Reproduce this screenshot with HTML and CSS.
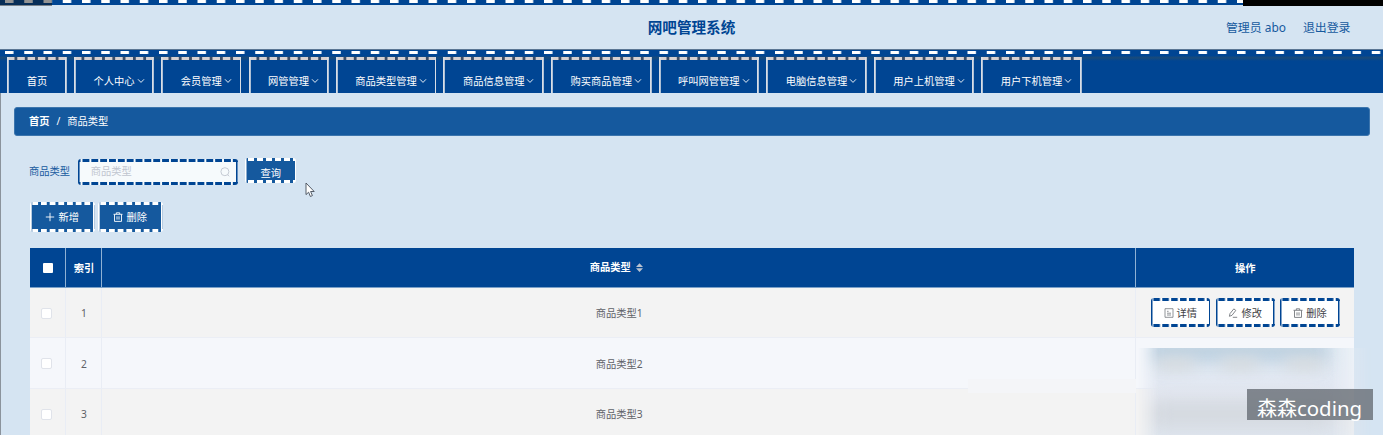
FILE: index.html
```html
<!DOCTYPE html>
<html lang="zh-CN">
<head>
<meta charset="utf-8">
<title>网吧管理系统</title>
<link rel="stylesheet" href="styles.css">
</head>
<body>
<svg class="defs" width="0" height="0">
  <symbol id="chev" viewBox="0 0 8 8"><path d="M1 2.3 4 5.4 7 2.3" fill="none" stroke="currentColor" stroke-width=".9"/></symbol>
  <symbol id="trash" viewBox="0 0 10 10"><path d="M.5 2.3h9M3.3 2.1V.8h3.4v1.3M1.5 2.4v7h7v-7M4 4.3v3.3M6 4.3v3.3" fill="none" stroke="currentColor" stroke-width=".9"/></symbol>
  <symbol id="doc" viewBox="0 0 10 10"><path d="M1 .7h8v8.6H1zM3 3.3h1.6M3 5.2h4M3 7h4" fill="none" stroke="currentColor" stroke-width=".8"/></symbol>
  <symbol id="edit" viewBox="0 0 10 10"><path d="M1.4 8.3 2 5.6 5.8.9l2 1.5L4 7.3ZM4.8 9.3h4.4" fill="none" stroke="currentColor" stroke-width=".9"/></symbol>
</svg>
<header class="topbar">
  <div class="stitches"></div>
  <div class="topbar-row">
    <h1 class="title">网吧管理系统</h1>
    <div class="account"><span>管理员 abo</span><span>退出登录</span></div>
  </div>
  <i class="mark mark-left"></i><i class="mark mark-right"></i>
</header>
<div class="menu">
  <div class="menu-stitches"></div>
  <nav class="tabs">
    <a class="tab home">首页</a>
    <a class="tab short">个人中心<svg><use href="#chev"/></svg></a>
    <a class="tab short">会员管理<svg><use href="#chev"/></svg></a>
    <a class="tab short">网管管理<svg><use href="#chev"/></svg></a>
    <a class="tab">商品类型管理<svg><use href="#chev"/></svg></a>
    <a class="tab">商品信息管理<svg><use href="#chev"/></svg></a>
    <a class="tab">购买商品管理<svg><use href="#chev"/></svg></a>
    <a class="tab">呼叫网管管理<svg><use href="#chev"/></svg></a>
    <a class="tab">电脑信息管理<svg><use href="#chev"/></svg></a>
    <a class="tab">用户上机管理<svg><use href="#chev"/></svg></a>
    <a class="tab">用户下机管理<svg><use href="#chev"/></svg></a>
  </nav>
</div>
<main class="page">
  <div class="crumbs"><b>首页</b><span class="sep">/</span><span>商品类型</span></div>
  <div class="search">
    <label class="label">商品类型</label>
    <div class="stitched field"><span>商品类型</span><svg class="lens" viewBox="0 0 10 10"><circle cx="4.9" cy="4.7" r="4" fill="none" stroke="currentColor" stroke-width=".9"/><path d="m7.6 7.7 1.7 1.6" stroke="currentColor" stroke-width=".9"/></svg></div>
    <button class="stitched query">查询</button>
  </div>
  <div class="actions">
    <button class="stitched act"><svg class="ico" viewBox="0 0 10 10"><path d="M5 .8v8.4M.8 5h8.4" stroke="currentColor" stroke-width=".9"/></svg>新增</button>
    <button class="stitched act"><svg class="ico"><use href="#trash"/></svg>删除</button>
  </div>
  <section class="table">
    <div class="row head">
      <div class="cell"><i class="box"></i></div><div class="cell">索引</div>
      <div class="cell">商品类型<svg class="sort" viewBox="0 0 7 9"><path d="M0 3.9 3.5.3 7 3.9zM0 5.3h7L3.5 8.9z" fill="#b9c2d0"/></svg></div>
      <div class="cell">操作</div>
    </div>
    <div class="row odd">
      <div class="cell"><i class="box"></i></div><div class="cell">1</div><div class="cell">商品类型1</div>
      <div class="cell ops">
        <button class="stitched op"><svg class="ico"><use href="#doc"/></svg>详情</button>
        <button class="stitched op"><svg class="ico"><use href="#edit"/></svg>修改</button>
        <button class="stitched op"><svg class="ico"><use href="#trash"/></svg>删除</button>
      </div>
    </div>
    <div class="row even"><div class="cell"><i class="box"></i></div><div class="cell">2</div><div class="cell">商品类型2</div><div class="cell"></div></div>
    <div class="row odd"><div class="cell"><i class="box"></i></div><div class="cell">3</div><div class="cell">商品类型3</div><div class="cell"></div></div>
  </section>
</main>
<div class="patch"></div>
<div class="haze"><div class="haze-edge"></div><i class="smudge s1"></i><i class="smudge s2"></i><i class="smudge s3"></i><i class="smudge s4"></i></div>
<div class="watermark">森森<span>coding</span></div>
<svg class="cursor" viewBox="0 0 10 16"><path d="M1 1v11.6l2.6-2.4 1.8 4.3 2-.9-1.8-4.1h3.6z" fill="#fff" stroke="#444c58" stroke-width=".9"/></svg>
</body>
</html>
```
FILE: styles.css
```css
* { box-sizing: border-box; }
body {
  margin: 0; width: 1383px; height: 435px; overflow: hidden; position: relative;
  background: #d5e4f2; color: #5f6268;
  font: 10.25px/1.4 "Noto Sans", "Noto Sans CJK SC", sans-serif;
}
.defs { position: absolute; }
button { font: inherit; padding: 0; border: 0; }

.topbar { height: 49px; position: relative; }
.stitches {
  height: 5px; background-color: #004593;
  background-image: linear-gradient(90deg, #fff 8px, transparent 9px);
  background-size: 19.26px 3px; background-position: 5px 0; background-repeat: repeat-x;
}
.topbar-row { display: grid; grid-template-columns: 1fr auto 1fr; align-items: center; height: 44px; }
.title { grid-column: 2; margin: 0; font-size: 14.6px; line-height: 20px; color: #004593; font-weight: 700; }
.account { display: flex; justify-content: flex-end; gap: 17px; padding-right: 32.5px; font-size: 11.9px; color: #15599e; }
.mark { position: absolute; top: 0; height: 6px; }
.mark-left { left: 0; width: 52px; background: rgba(15, 15, 15, .45); }
.mark-right { right: 0; width: 140px; background: #000; }

.menu { height: 44px; background: linear-gradient(#5b7694 0 1px, #004593 1px 7px, #174a7c 8px 9px, #004593 12px); }
.menu-stitches {
  height: 7.5px;
  background: linear-gradient(90deg, #fff 8px, transparent 9px) 5px 2px / 19.26px 3px repeat-x;
}
.tabs { display: flex; gap: 7.1px; padding-left: 7.2px; }
.tab {
  display: flex; justify-content: center; align-items: center; width: 100.5px; height: 36.5px; padding: 13px 0 0;
  color: #fff; white-space: nowrap;
  background:
    linear-gradient(#d9dee6, #d9dee6) 0 0 / 1.8px 100% no-repeat,
    linear-gradient(#d9dee6, #d9dee6) 100% 0 / 1.8px 100% no-repeat,
    linear-gradient(90deg, #d5d0d1 7.8px, #3c4e68 7.8px) 0 0 / 10.3px 3px repeat-x,
    #004593;
}
.tab.short { width: 80.2px; }
.tab.home { width: 59.7px; }
.tab:not(.home) { padding-left: 10px; }
.tab svg { width: 8px; height: 8px; margin-left: 2px; }

.page { height: 342px; padding: 14px 13.5px 0 13px; border-left: 1px solid #8b939c; }
.crumbs {
  display: flex; align-items: center; height: 29px; padding-left: 14px;
  color: #fff; background: #15599e; border: 1px solid #3c75ad; border-radius: 3px;
}
.crumbs .sep { margin: 0 7px; }
.search { display: flex; align-items: flex-start; padding: 22px 0 0 15px; height: 66px; }
.label { width: 49.3px; padding-top: 6px; color: #15599e; }
.stitched {
  display: flex; align-items: center; justify-content: center; border-radius: 3px;
  background:
    linear-gradient(var(--line), var(--line)) 0 0 / var(--side) 100% no-repeat,
    linear-gradient(var(--line), var(--line)) 100% 0 / var(--side) 100% no-repeat,
    linear-gradient(90deg, var(--line) var(--dash), transparent calc(var(--dash) + .6px)) var(--shift) 0 / var(--step) 3px repeat-x,
    linear-gradient(90deg, var(--line) var(--dash), transparent calc(var(--dash) + .6px)) var(--shift) 100% / var(--step) 3px repeat-x,
    var(--fill);
}
.field {
  --line: #004593; --side: 1.6px; --dash: 6.6px; --step: 8.85px; --shift: 4.5px; --fill: #f6fafc;
  width: 159.5px; height: 26px; margin-top: 1px; padding: 0 8px 1px 12.5px; justify-content: space-between; color: #c0c5cf;
}
.lens { width: 10px; height: 10px; }
.query {
  --line: #fff; --side: 1.5px; --dash: 5.8px; --step: 9px; --shift: 3px; --fill: #15599e;
  width: 51px; height: 25px; margin-left: 7.5px; padding-top: 5px; color: #fff;
}
.actions { display: flex; gap: 2.5px; padding-left: 15.5px; height: 47px; }
.act {
  --line: #fff; --side: 1.7px; --dash: 5.4px; --step: 8.7px; --shift: 2.3px; --fill: #15599e;
  width: 65.5px; height: 30px; color: #fff; margin-top: 0; padding-top: 0;
}
.ico { width: 10px; height: 10px; margin-right: 3px; }

.table { margin: -1px 15.5px 0 15.5px; }
.row { display: grid; grid-template-columns: 36.3px 36.5px 1034px 1fr; height: 50.3px; }
.row.head { height: 40px; background: #004593; color: #fff; font-weight: 700; border-bottom: 1px solid #7aa0c8; }
.cell { display: flex; align-items: center; justify-content: center; padding: 2px 0 0 1px; border-right: 1px solid #e9edf5; border-bottom: 1px solid #ebeef5; }
.head .cell { padding-top: 1px; border-bottom: 0; border-right-color: #8fb1d4; }
.cell:last-child { border-right: 0; }
.odd { background: #f3f3f3; }
.even { background: #f5f7fb; }
.box { width: 11px; height: 11px; background: #fff; border: 1px solid #e0e3ea; border-radius: 2px; margin-right: 2px; }
.head .box { width: 10px; height: 10px; margin-right: 0; border: 0; border-radius: 1px; }
.head .cell:first-child { padding-left: 2px; }
.sort { width: 7px; height: 9px; margin-left: 5px; }
.head .cell:nth-child(3) { padding-right: 6px; padding-top: 0; }
.head .cell:last-child { padding-left: 0; }
.ops { gap: 5.5px; padding-left: 0; padding-top: 0; }
.op {
  --line: #004593; --side: 1.5px; --dash: 6.2px; --step: 8.9px; --shift: 2.4px; --fill: #fff;
  width: 59.3px; height: 29px; padding-top: 1px; color: #3f4246;
}
.op .ico { color: #75787d; }

.patch { position: absolute; left: 968px; top: 379px; width: 168px; height: 14px; background: #f4f5f8; }
.haze {
  position: absolute; left: 1136px; top: 348px; width: 236px; height: 87px; overflow: hidden;
  background: linear-gradient(#dfe9f2, #e2e8f2 35px, #e3e7f0 48px, #dee2e8 65px, #dfe6ef);
  -webkit-mask-image: linear-gradient(90deg, transparent 2px, #000 22px 196px, transparent);
  mask-image: linear-gradient(90deg, transparent 2px, #000 22px 196px, transparent);
}
.haze-edge { position: absolute; left: 10px; top: -8px; width: 182px; height: 22px; background: #bdd0e0; filter: blur(8px); }
.smudge { position: absolute; filter: blur(7px); background: #d8dcdf; width: 36px; height: 12px; top: 10px; }
.s1 { left: 22px; }
.s2 { left: 86px; }
.s3 { left: 150px; }
.s4 { left: 14px; top: 54px; width: 180px; height: 24px; background: #d3d8df; filter: blur(10px); }
.watermark {
  position: absolute; left: 1247px; top: 389px; width: 126px; height: 31px; padding-left: 10px;
  background: rgba(100, 106, 114, .78); color: #fff; font-size: 20px; line-height: 39px; white-space: nowrap;
}
.watermark span { font-size: 20.4px; }
.cursor { position: absolute; left: 304.5px; top: 182px; width: 10px; height: 16px; }
```
